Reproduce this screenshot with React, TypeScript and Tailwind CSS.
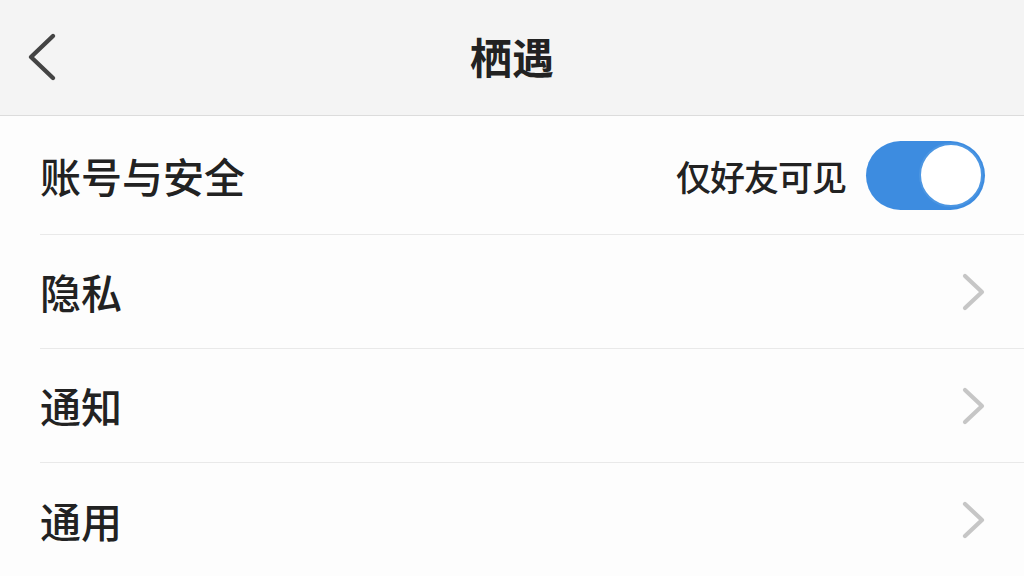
const rows = ['隐私', '通知', '通用'];

function Chevron({ className }: { className?: string }) {
  return (
    <svg width="24" height="40" viewBox="0 0 24 40" fill="none" className={className}>
      <polyline
        points="4,4 21,20 4,36"
        stroke="currentColor"
        strokeWidth="4.2"
        strokeLinecap="round"
        strokeLinejoin="round"
      />
    </svg>
  );
}

export default function App() {
  return (
    <div
      className="w-[1024px] h-[576px] overflow-hidden bg-[#fdfdfd] text-[#222]"
      style={{ fontFamily: '"Noto Sans CJK SC", "Noto Sans", sans-serif' }}
    >
      {/* header */}
      <div className="relative h-[116px] bg-[#f4f4f4] border-b border-[#dcdcdc] flex items-center justify-center">
        <svg
          width="32"
          height="52"
          viewBox="0 0 32 52"
          fill="none"
          className="absolute left-[26px] top-[31px] text-[#444]"
        >
          <polyline
            points="27,5 5,26 27,47"
            stroke="currentColor"
            strokeWidth="4.4"
            strokeLinecap="round"
            strokeLinejoin="round"
          />
        </svg>
        <h1 className="text-[42px] font-semibold leading-none -mt-1">栖遇</h1>
      </div>

      {/* account row */}
      <div className="pl-10">
        <div className="h-[119px] flex items-center justify-between pr-[39px] border-b border-[#e9e9e9]">
          <span className="text-[41px] leading-none font-medium">账号与安全</span>
          <div className="flex items-center gap-[20px]">
            <span className="text-[35px] leading-none font-medium tracking-[-1px]">仅好友可见</span>
            <div className="w-[119px] h-[69px] rounded-full bg-[#3d8ce0] flex items-center justify-end pr-[2px]">
              <div className="w-[64px] h-[64px] rounded-full bg-white border-2 border-[#4c96e2]" />
            </div>
          </div>
        </div>

        {rows.map((label, i) => (
          <div
            key={label}
            className={`h-[114px] flex items-center justify-between pr-[39px] ${
              i < rows.length - 1 ? 'border-b border-[#e9e9e9]' : ''
            }`}
          >
            <span className="text-[41px] leading-none font-medium">{label}</span>
            <Chevron className="text-[#c6c6c6]" />
          </div>
        ))}
      </div>
    </div>
  );
}
